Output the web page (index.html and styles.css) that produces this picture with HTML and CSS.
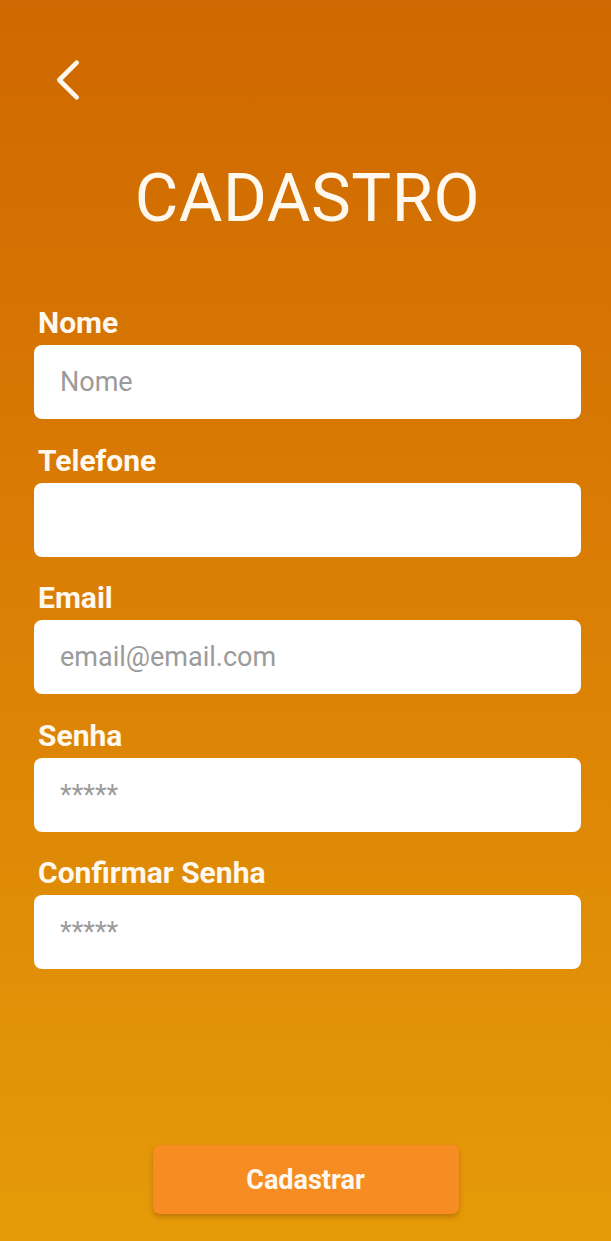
FILE: index.html
```html
<!DOCTYPE html>
<html lang="pt">
<head>
<meta charset="utf-8">
<title>Cadastro</title>
<link rel="stylesheet" href="styles.css">
</head>
<body>
<div class="page">
  <header class="top">
    <button class="back" aria-label="Voltar">
      <svg width="30" height="44" viewBox="0 0 30 44"><path d="M20.7 4.7 L3.3 22 L20.7 39.3" fill="none" stroke="#fff8ee" stroke-width="4.6" stroke-linecap="round" stroke-linejoin="round"/></svg>
    </button>
  </header>
  <h1 class="title">CADASTRO</h1>
  <form class="form">
    <label class="field">
      <span class="label">Nome</span>
      <input class="input" type="text" placeholder="Nome">
    </label>
    <label class="field">
      <span class="label">Telefone</span>
      <input class="input" type="tel">
    </label>
    <label class="field">
      <span class="label">Email</span>
      <input class="input" type="email" placeholder="email@email.com">
    </label>
    <label class="field">
      <span class="label">Senha</span>
      <input class="input" type="password" placeholder="*****">
    </label>
    <label class="field">
      <span class="label">Confirmar Senha</span>
      <input class="input" type="password" placeholder="*****">
    </label>
  </form>
  <div class="actions">
    <button class="submit" type="button">Cadastrar</button>
  </div>
</div>
</body>
</html>
```

FILE: styles.css
```css
html, body {
  margin: 0;
  padding: 0;
}
body {
  font-family: Roboto, "Liberation Sans", sans-serif;
  background: linear-gradient(180deg, #cf6800 0%, #da7d05 45%, #e59b08 100%);
  min-height: 1241px;
}
.page {
  height: 1241px;
  box-sizing: border-box;
  display: flex;
  flex-direction: column;
  padding: 58px 30px 27px 34px;
}
.top {
  display: flex;
  height: 44px;
}
.back {
  background: none;
  border: 0;
  padding: 0;
  margin-left: 22px;
  width: 30px;
  height: 44px;
  cursor: pointer;
}
.back svg { display: block; }
.title {
  margin: 56px 0 0;
  text-align: center;
  font-weight: 400;
  font-size: 67px;
  line-height: 80px;
  color: #fff8ee;
  letter-spacing: 0.5px;
}
.form {
  display: flex;
  flex-direction: column;
  gap: 24.5px;
  margin-top: 68px;
}
.field {
  display: flex;
  flex-direction: column;
}
.label {
  font-weight: 700;
  font-size: 30px;
  line-height: 34px;
  color: #fff8ee;
  padding-left: 4px;
  margin-bottom: 5px;
}
.input {
  height: 74px;
  box-sizing: border-box;
  border: 0;
  border-radius: 8px;
  background: #ffffff;
  padding: 0 26px;
  font-family: Roboto, "Liberation Sans", sans-serif;
  font-size: 27px;
  color: #333;
  outline: none;
}
.input::placeholder {
  color: #9b9b9b;
}
.actions {
  margin-top: auto;
  display: flex;
  justify-content: center;
}
.submit {
  width: 306px;
  height: 69px;
  border: 0;
  border-radius: 7px;
  background: #f68c22;
  color: #fff8ee;
  font-family: Roboto, "Liberation Sans", sans-serif;
  font-weight: 700;
  font-size: 27px;
  box-shadow: 0 3px 5px rgba(120, 60, 0, 0.35);
  margin-left: -4px;
}
```
